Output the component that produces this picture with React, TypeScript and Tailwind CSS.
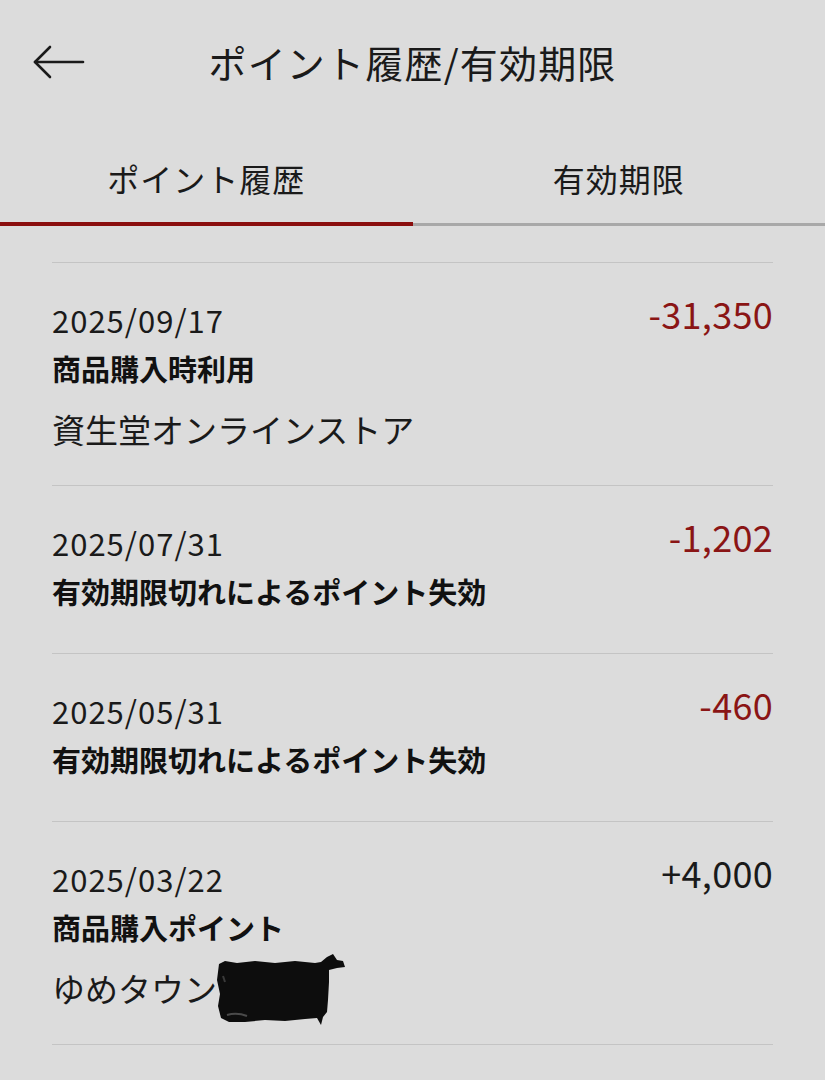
interface HistoryItem {
  id: string;
  date: string;
  label: string;
  store?: string;
  amount: string;
  redacted?: boolean;
}

const items: HistoryItem[] = [
  { id: 'a', date: '2025/09/17', label: '商品購入時利用', store: '資生堂オンラインストア', amount: '-31,350' },
  { id: 'b', date: '2025/07/31', label: '有効期限切れによるポイント失効', amount: '-1,202' },
  { id: 'c', date: '2025/05/31', label: '有効期限切れによるポイント失効', amount: '-460' },
  { id: 'd', date: '2025/03/22', label: '商品購入ポイント', store: 'ゆめタウン', amount: '+4,000', redacted: true },
];

// hand-drawn redaction over the store branch name
function Scribble() {
  return (
    <svg width="132" height="80" viewBox="0 0 132 80" className="absolute left-[-2px] top-[-14px]">
      <path
        d="M4 12 L10 9 L22 11 L40 9 L60 11 L80 9 L100 11 L106 10 L112 5 L118 2 L122 8 L128 9 L130 15 L122 16 L114 18 L114 30 L113 48 L112 60 L108 65 L106 73 L102 66 L90 67 L70 69 L50 68 L30 70 L14 70 L6 66 L3 54 L5 42 L2 28 Z"
        fill="#0d0d0d"
      />
      <path d="M12 63 Q22 60 32 64" stroke="#4a4a4a" strokeWidth="2" fill="none" />
      <path d="M8 24 L10 30" stroke="#3a3a3a" strokeWidth="2" fill="none" />
    </svg>
  );
}

function BackArrow() {
  return (
    <svg width="54" height="34" viewBox="0 0 54 34" fill="none" stroke="#1a1a1a" strokeWidth="2.6" strokeLinecap="round" strokeLinejoin="round">
      <path d="M3 17 H51" />
      <path d="M18 2 L3 17 L18 32" />
    </svg>
  );
}

function HistoryRow({ item }: { item: HistoryItem }) {
  const negative = item.amount.startsWith('-');
  return (
    <div className={`flex justify-between border-b border-[#c4c4c4] pt-[37px] ${item.store ? 'pb-[34px]' : 'pb-[43px]'}`}>
      <div className="min-w-0">
        <p className="text-[31px] leading-[40px] tracking-[1px] text-[#1a1a1a]">{item.date}</p>
        <p className="mt-[9px] text-[29px] font-bold leading-[38px] text-[#111]">{item.label}</p>
        {item.store ? (
          <p className="mt-[20px] flex text-[33px] leading-[44px] text-[#1a1a1a]">
            {item.store}
            {item.redacted ? (
              <span className="relative inline-block w-[132px]">
                <Scribble />
              </span>
            ) : null}
          </p>
        ) : null}
      </div>
      <p
        className={`-mt-[7px] text-[36px] leading-[40px] tracking-[0.3px] ${negative ? 'text-[#8a1515]' : 'text-[#1a1a1a]'}`}
      >
        {item.amount}
      </p>
    </div>
  );
}

export default function App() {
  return (
    <div
      className="min-h-[1080px] bg-[#dcdcdc] text-[#1a1a1a]"
      style={{ fontFamily: '"Noto Sans CJK JP", "Noto Sans", sans-serif' }}
    >
      <header className="grid h-[124px] grid-cols-[1fr_auto_1fr] items-center">
        <div className="pl-[32px]">
          <BackArrow />
        </div>
        <h1 className="text-[38px] leading-[48px] tracking-[1.2px]">ポイント履歴/有効期限</h1>
        <div />
      </header>

      <nav>
        <div className="flex pt-[32px] pb-[22px]">
          <button type="button" className="flex-1 text-center text-[32px] leading-[44px] tracking-[1px] text-[#1a1a1a]">
            ポイント履歴
          </button>
          <button type="button" className="flex-1 text-center text-[32px] leading-[44px] tracking-[1px] text-[#1a1a1a]">
            有効期限
          </button>
        </div>
        <div className="flex h-[4px] items-center">
          <div className="h-[4px] w-1/2 bg-[#8a0e0e]" />
          <div className="h-[3px] flex-1 bg-[#a8a8a8]" />
        </div>
      </nav>

      <section className="mx-[52px] mt-[36px] border-t border-[#c4c4c4]">
        {items.map((item) => (
          <HistoryRow key={item.id} item={item} />
        ))}
      </section>
    </div>
  );
}
